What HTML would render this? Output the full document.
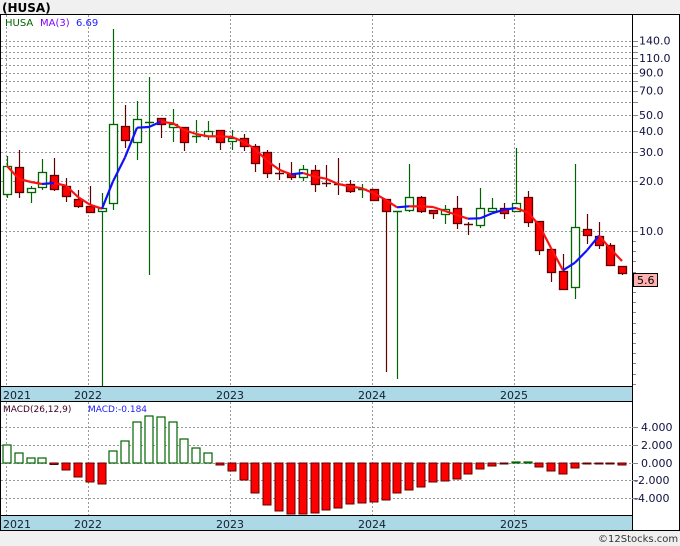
<!DOCTYPE html>
<html><head><meta charset="utf-8"><style>
body{margin:0;width:680px;height:546px;overflow:hidden;background:#f0f0f0;font-family:"DejaVu Sans",sans-serif}
svg{display:block}
text{font-family:"DejaVu Sans","Liberation Sans",sans-serif}
</style></head><body>
<svg id="s" width="680" height="546" xmlns="http://www.w3.org/2000/svg"></svg>
<script>
var S=document.getElementById('s'),h='';
function r(x,y,w,hh,f,st,sw){h+='<rect x="'+x+'" y="'+y+'" width="'+w+'" height="'+hh+'" fill="'+f+'"'+(st?' stroke="'+st+'" stroke-width="'+(sw||1)+'"':'')+'/>';}
function l(x1,y1,x2,y2,c,w,d){h+='<line x1="'+x1+'" y1="'+y1+'" x2="'+x2+'" y2="'+y2+'" stroke="'+c+'" stroke-width="'+(w||1)+'"'+(d?' stroke-dasharray="'+d+'"':'')+'/>';}
function t(x,y,s,c,sz,extra){h+='<text x="'+x+'" y="'+y+'" fill="'+c+'" font-size="'+sz+'" '+(extra||'')+'>'+s+'</text>';}
r(0,0,680,546,'#f0f0f0');
t(2,12,'(HUSA)','#000',12,'font-weight="bold"');
r(0.5,14.5,679,516,'#fff','#000');
function py(p){return 231-166*Math.log10(p/10);}
[140,130,120,110,100,90,80,70,60,50,40,30,20,10].forEach(function(p){var y=Math.round(py(p))+.5;l(1,y,632,y,'#999',1,'2,2');l(632,y,638,y,'#888');});
for(var y=241;y<386;y+=10.2){l(632,Math.round(y)+.5,636,Math.round(y)+.5,'#888');}
[[140,'140.0'],[110,'110.0'],[90,'90.0'],[70,'70.0'],[50,'50.0'],[40,'40.0'],[30,'30.0'],[20,'20.0'],[10,'10.0']].forEach(function(a){t(639,py(a[0])+4,a[1],'#101040',11);});
[6.5,88.5,230.5,372.5,514.5].forEach(function(x){l(x,15,x,386,'#999',1,'2,2');l(x,402,x,516,'#999',1,'2,2');});
l(632.5,14,632.5,530,'#000');
t(5,26,'HUSA','#006400',10);t(40,26,'MA(3)','#8000ff',10);t(76,26,'6.69','#2020ff',10);
var C=[['g',166,194,156,198],['r',167,192,150,198],['g',188,192,186,203],['g',172,187,159,190],['r',175,189,158,191],['r',186,196,178,202],['r',199,206,190,208],['r',206,212,186,212],['g',208,211,193,386],['g',124,203,29,210],['r',126,140,105,148],['g',119,142,101,160],['g',122,123,77,275],['r',118,124,118,138],['g',124,127,109,142],['r',127,142,127,151],['g',136,136,120,143],['g',131,136,121,140],['r',130,142,130,150],['g',138,141,130,150],['r',138,146,134,151],['r',146,163,144,172],['r',152,173,150,178],['r',173,173,163,180],['r',174,177,162,180],['g',169,177,165,181],['r',170,184,165,192],['r',183,183,165,187],['r',184,185,158,195],['r',184,191,180,193],['g',189,190,184,198],['r',189,200,189,200],['r',199,211,199,372],['g',211,212,211,379],['g',197,210,164,212],['r',197,211,196,213],['r',210,213,210,219],['g',209,214,205,224],['r',208,223,196,229],['r',224,224,222,235],['g',208,225,188,228],['g',208,211,198,212],['r',208,213,203,219],['g',203,211,148,211],['r',197,222,191,227],['r',221,250,221,255],['r',249,272,249,282],['r',271,289,254,289],['g',227,287,164,299],['r',229,235,214,244],['r',236,245,222,249],['r',245,265,243,266],['r',266,273,266,275]];
function cx(i){return Math.round(7+11.83*i);}
var closes=[];
C.forEach(function(c,i){var x=cx(i),g=c[0]=='g';var wc=g?'#006400':'#600000';
 l(x+.5,c[3],x+.5,c[4],wc,1.2);
 var hh=c[2]-c[1];
 if(hh<2){l(x-4,c[1]+.5,x+5,c[1]+.5,wc,1.5);}
 else if(g)r(x-3.5,c[1]+.5,8,hh,'#fff','#006400',1.3);
 else r(x-3.5,c[1]+.5,8,hh,'#ff0000','#600000',1.3);
 closes.push(g?c[1]:c[2]);});
var ma=[];for(var i=0;i<C.length;i++){var s=0,n=0;for(var j=Math.max(0,i-2);j<=i;j++){s+=closes[j];n++;}ma.push(s/n);}
for(var i=1;i<ma.length;i++){var col=ma[i]<ma[i-1]?'#1010ff':'#ff1010';l(cx(i-1),ma[i-1],cx(i),ma[i],col,2.2);}
r(633.5,273.5,24,13,'#ffb0b0','#000');t(637,284,'5.6','#000',11);
function bar(y){r(1,y,631,15,'#add8e6');l(0,y+.5,632,y+.5,'#000');l(0,y+15.5,632,y+15.5,'#000');
 [[3,'2021'],[74,'2022'],[216,'2023'],[358,'2024'],[500,'2025']].forEach(function(a){t(a[0],y+13,a[1],'#102030',11);});}
[427,445,463,480,498].forEach(function(y){l(1,y+.5,632,y+.5,'#999',1,'2,2');l(632,y+.5,638,y+.5,'#888');});
[[427,'4.000'],[445,'2.000'],[463,'0.000'],[480,'-2.000'],[498,'-4.000']].forEach(function(a){t(a[1][0]=='-'?634:641,a[0]+4,a[1],'#101040',11);});
t(3,412,'MACD(26,12,9)','#400020',9);t(88,412,'MACD:-0.184','#2020ff',9);
var M=[18,10,5,5,-1.5,-7,-14,-19,-21,12,22,41,47,46,41,24,15,10,-2,-8,-17,-30,-42,-48,-51,-51,-50,-47,-45,-41,-40,-39,-37,-30,-27,-24,-19,-18,-16,-11,-6,-3,-1,1,1,-4,-8,-11,-5,-1,-0.5,-1,-2];
M.forEach(function(v,i){var x=cx(i);if(v>0)r(x-4,463-v,8,v,'#fff','#006400',1.2);else{var hh=Math.max(-v,1);r(x-4,463,8,hh,'#ff0000','#600000',1);}});
bar(386);bar(515);
t(598,542,'©12Stocks.com','#333',10);
S.innerHTML=h;
</script>
</body></html>
